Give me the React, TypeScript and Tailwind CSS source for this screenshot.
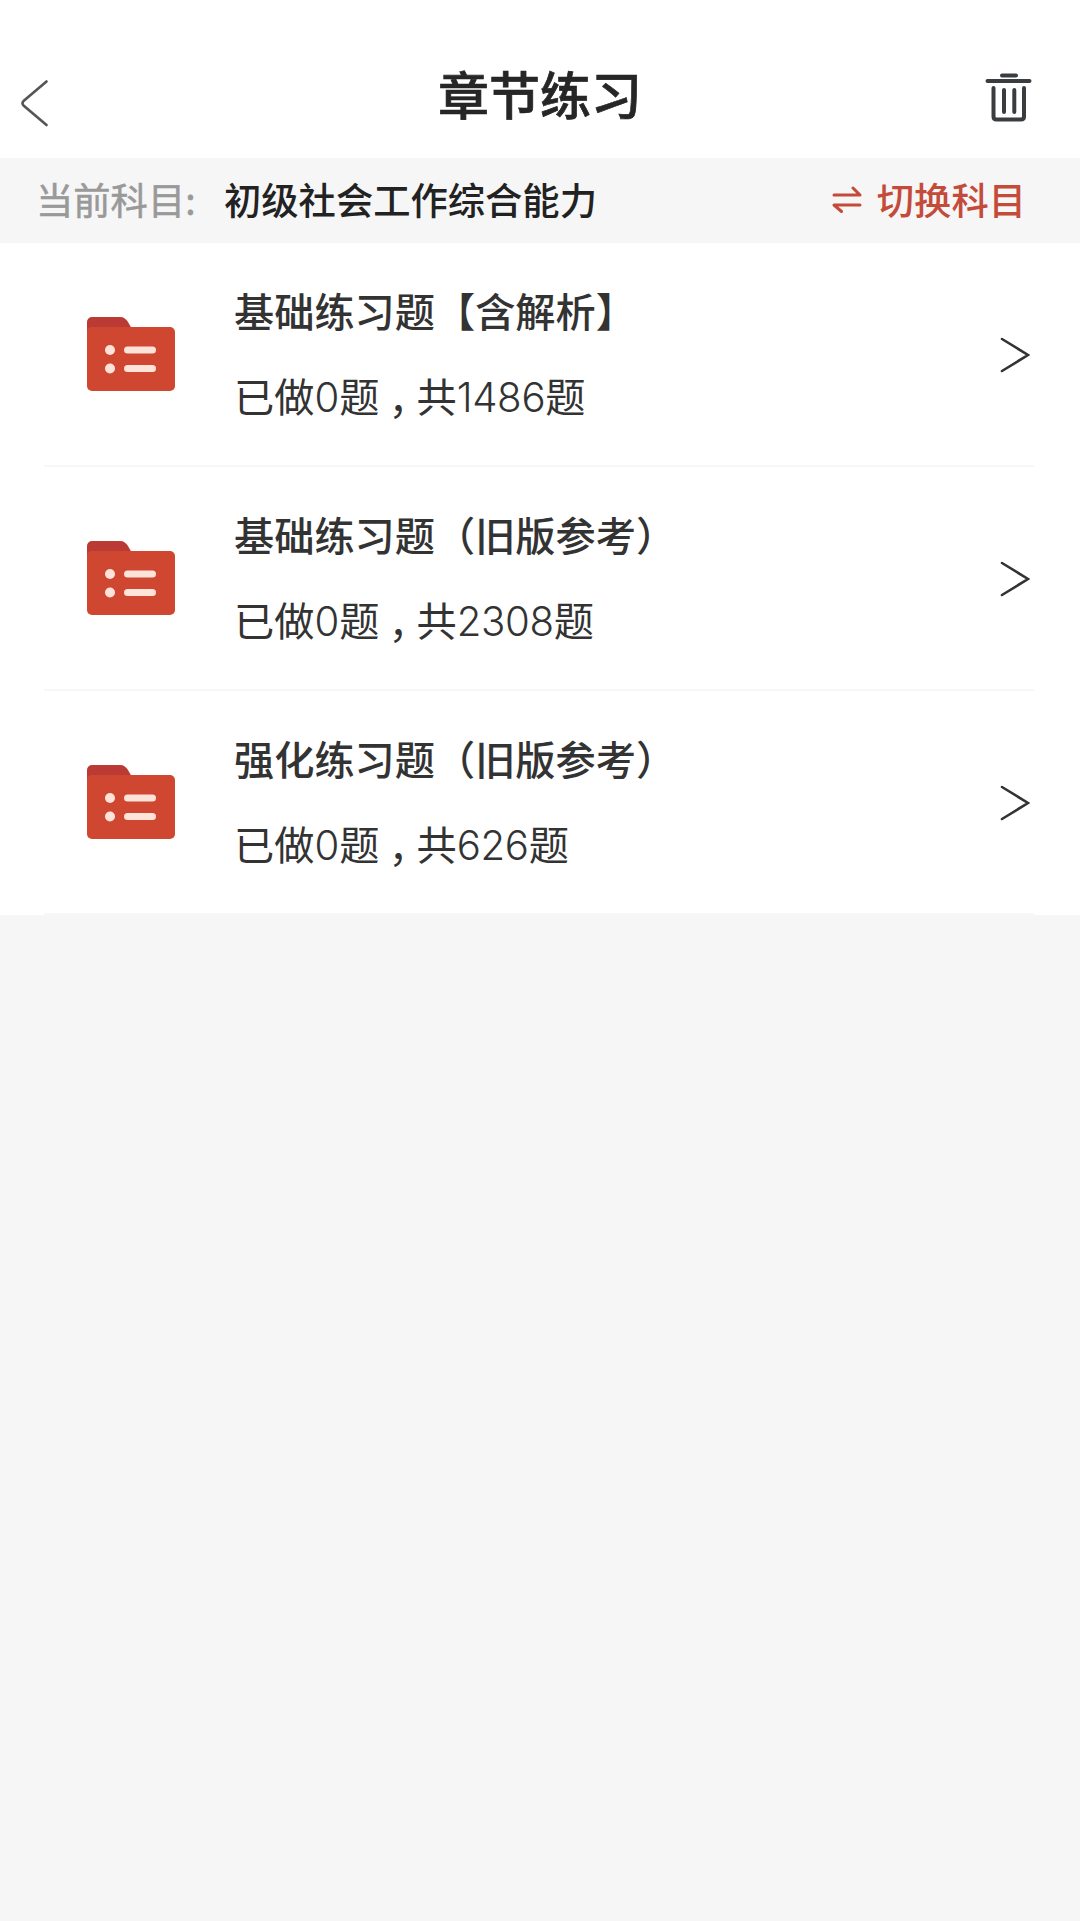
import React from 'react';

interface Chapter {
  title: string;
  done: number;
  total: number;
}

const chapters: Chapter[] = [
  { title: '基础练习题【含解析】', done: 0, total: 1486 },
  { title: '基础练习题（旧版参考）', done: 0, total: 2308 },
  { title: '强化练习题（旧版参考）', done: 0, total: 626 },
];

const FolderIcon: React.FC = () => (
  <svg className="w-[88px] h-[75px] shrink-0" viewBox="0 0 88 75">
    <path d="M0 5a5 5 0 0 1 5-5h28c4 0 6 2 8 5l4 7v12H0z" fill="#bb3a34" />
    <path d="M0 14q0-4 5-4h78a5 5 0 0 1 5 5v54a5 5 0 0 1-5 5H5a5 5 0 0 1-5-5z" fill="#cf4631" />
    <g fill="#fde3d8">
      <circle cx="23" cy="33" r="5" />
      <circle cx="23" cy="51.5" r="5" />
      <rect x="37" y="29.5" width="32" height="7" rx="3.5" />
      <rect x="37" y="48" width="32" height="7" rx="3.5" />
    </g>
  </svg>
);

const Header: React.FC = () => (
  <header className="h-[158px] pt-[63px] px-5 grid grid-cols-[1fr_auto_1fr] items-start">
    <button className="mt-4">
      <svg className="w-[30px] h-[50px]" viewBox="0 0 30 50" fill="none" stroke="#555" strokeWidth="2.6" strokeLinecap="round" strokeLinejoin="round">
        <path d="M26.5 2.5 3.5 22q-2 2.2 0 4.4L26.5 46" />
      </svg>
    </button>
    <h1 className="text-[51px] leading-[60px] font-medium text-[#262626] [-webkit-text-stroke:0.7px]">章节练习</h1>
    <button className="mt-[9px] mr-7 justify-self-end">
      <svg className="w-[48px] h-[52px]" viewBox="0 0 48 52" fill="none" stroke="#3a3d40" strokeWidth="4" strokeLinecap="round">
        <path d="M18 3.5h14M3.5 9h42M9.5 16v28.5q0 3 3 3h24.5q3 0 3-3V16M20 18v22M30.3 18v22" />
      </svg>
    </button>
  </header>
);

const SubjectBar: React.FC = () => (
  <div className="h-[85px] pb-[3px] bg-[#f6f6f6] pl-9 pr-[54px] flex items-center text-[37.3px] leading-[56px] font-medium">
    <span className="w-[188px] text-[#999] font-normal [-webkit-text-stroke:0.5px]">当前科目:</span>
    <span className="text-[#222]">初级社会工作综合能力</span>
    <button className="ml-auto flex items-center text-[#c44b3a]">
      <svg className="w-[30px] h-[28px] mr-[15px]" viewBox="0 0 30 28" fill="none" stroke="currentColor" strokeWidth="3" strokeLinecap="round" strokeLinejoin="round">
        <path d="M2 10h26L21 3M28 20H2L9.5 26.5" />
      </svg>
      切换科目
    </button>
  </div>
);

const ChapterRow: React.FC<{ chapter: Chapter }> = ({ chapter }) => (
  <li className="ml-[44px] mr-[46px] h-[224px] pl-[43px] pr-1 flex items-center border-b-2 border-[#f7f7f7]">
    <FolderIcon />
    <div className="ml-[59px] flex-1 text-[40.2px] text-[#333]">
      <h2 className="leading-[60px] font-medium">{chapter.title}</h2>
      <p className="mt-[25px] leading-[60px] flex">
        已做<span className="pt-[3px] font-['Inter'] font-light">{chapter.done}</span>题
        <span className="w-[37px] pl-[9px] pt-0.5 [font-feature-settings:'halt']">，</span>
        共<span className="pt-[3px] font-['Inter'] font-light tracking-[-0.3px]">{chapter.total}</span>题
      </p>
    </div>
    <svg className="mt-0.5 w-[30px] h-[36px]" viewBox="0 0 30 36" fill="none" stroke="#333" strokeWidth="2.6" strokeLinecap="round">
      <path d="M2 2 28 18 2 34" />
    </svg>
  </li>
);

const App: React.FC = () => {
  return (
    <div className="min-h-screen bg-[#f6f6f6] font-['Noto_Sans_CJK_SC',sans-serif]">
      <div className="bg-white">
        <Header />
        <SubjectBar />
        <ul>
          {chapters.map((chapter) => (
            <ChapterRow key={chapter.title} chapter={chapter} />
          ))}
        </ul>
      </div>
    </div>
  );
};

export default App;
